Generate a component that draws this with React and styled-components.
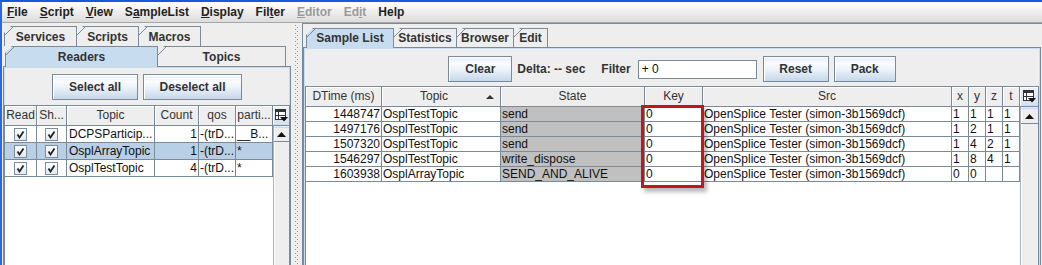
import React from 'react';
import styled, { createGlobalStyle } from 'styled-components';

const LINE = '#7a8a99';
const FONT = '"Liberation Sans", Arial, sans-serif';

const GlobalStyle = createGlobalStyle`
  html, body { margin: 0; padding: 0; background: #eeeeee; }
  body { font-family: ${FONT}; font-size: 12px; color: #333; }
`;

const Frame = styled.div`
  width: 1042px;
  height: 265px;
  box-sizing: border-box;
  border-top: 2px solid #1559dc;
  border-left: 2px solid #2a67e0;
  background: #eeeeee;
  display: flex;
  flex-direction: column;
  overflow: hidden;
`;

const MenuBar = styled.div`
  flex: none;
  height: 20px;
  border-bottom: 1px solid #a8a8a8;
  background: linear-gradient(#ffffff, #dcdcdc);
  display: flex;
  align-items: center;
  gap: 12px;
  padding-left: 5px;
`;

const MenuItem = styled.span`
  font-weight: bold;
  font-size: 12px;
  color: ${p => (p.$disabled ? '#9a9a9a' : '#222')};
  u { text-underline-offset: 1px; }
`;

const Body = styled.div`
  flex: none;
  height: 300px;
  display: flex;
`;

const LeftPane = styled.div`
  width: 289px;
  flex: none;
  display: flex;
  flex-direction: column;
  padding-top: 3px;
  box-sizing: border-box;
`;

const Splitter = styled.div`
  width: 11px;
  flex: none;
  display: flex;
  justify-content: center;
  padding-top: 2px;
`;

const Grip = styled.div`
  width: 3px;
  background-image:
    repeating-linear-gradient(to bottom, #8e9cab 0 1px, transparent 1px 4px),
    repeating-linear-gradient(to bottom, transparent 0 2px, #8e9cab 2px 3px, transparent 3px 4px);
  background-size: 1px 100%, 1px 100%;
  background-position: 0 0, 2px 0;
  background-repeat: no-repeat;
`;

const RightPane = styled.div`
  flex: 1;
  display: flex;
  flex-direction: column;
  border-top: 1px solid ${LINE};
  border-left: 1px solid ${LINE};
  padding-top: 4px;
  min-width: 0;
`;

const TabRow = styled.div`
  flex: none;
  height: ${p => p.$h}px;
  display: flex;
  align-items: flex-start;
  padding-left: ${p => p.$inset}px;
`;

const Tab = styled.div`
  position: relative;
  z-index: ${p => (p.$selected ? 1 : 0)};
  box-sizing: border-box;
  width: ${p => p.$w}px;
  height: ${p => p.$h + (p.$selected ? 1 : 0)}px;
  padding-bottom: ${p => (p.$selected ? 1 : 0)}px;
  border: 1px solid ${LINE};
  border-bottom: none;
  margin-right: -1px;
  background: ${p => (p.$selected ? '#c8dcf0' : '#eeeeee')};
  font-weight: bold;
  font-size: 12px;
  color: #333;
  display: flex;
  align-items: center;
  justify-content: center;
  clip-path: polygon(7px 0, 100% 0, 100% 100%, 0 100%, 0 7px);

  &::before {
    content: '';
    position: absolute;
    left: 0;
    top: 0;
    width: 8px;
    height: 8px;
    background: linear-gradient(to bottom right,
      transparent calc(50% - 0.7px), ${LINE} calc(50% - 0.7px),
      ${LINE} calc(50% + 0.7px), transparent calc(50% + 0.7px));
  }
`;

const TabContent = styled.div`
  flex: 1;
  display: flex;
  flex-direction: column;
  border: 1px solid ${LINE};
  margin: ${p => p.$margin};
  padding: ${p => p.$pad};
  box-shadow: inset 0 0 0 1px #c8dcf0;
  min-height: 0;
`;

const ButtonRow = styled.div`
  flex: none;
  display: flex;
  justify-content: center;
  align-items: center;
  gap: ${p => p.$gap ?? 5}px;
  padding: ${p => p.$pad};
`;

const Button = styled.button`
  box-sizing: border-box;
  width: ${p => p.$w}px;
  height: 26px;
  margin: 0 0 0 ${p => p.$ml || 0}px;
  padding: 0;
  border: 1px solid ${LINE};
  border-radius: 0;
  background: linear-gradient(to bottom, #e6eef6 0%, #fbfcfe 28%, #eaf1f8 55%, #c5d7ea 100%);
  box-shadow: inset 1px 1px 0 #ffffff;
  font-family: ${FONT};
  font-weight: bold;
  font-size: 12px;
  color: #333;
`;

const Label = styled.span`
  font-weight: bold;
  font-size: 12px;
  color: #333;
  margin: 0 ${p => p.$mr || 0}px 0 ${p => p.$ml || 0}px;
`;

const FilterInput = styled.input`
  box-sizing: border-box;
  width: 119px;
  height: 19px;
  margin: 0 0 0 7px;
  border: 1px solid ${LINE};
  padding: 0 3px;
  background: #fff;
  font-family: ${FONT};
  font-size: 12px;
  color: #111;
  outline: none;
`;

const ScrollPane = styled.div`
  position: relative;
  flex: 1;
  min-height: 0;
  display: grid;
  grid-template-columns: 1fr ${p => p.$bar}px;
  grid-template-rows: 20px 1fr;
  border: 1px solid ${LINE};
  background: #ffffff;
  margin-top: ${p => p.$mt || 0}px;
`;

const HeaderRow = styled.div`
  display: grid;
  grid-template-columns: ${p => p.$cols};
  background: #eeeeee;
`;

const HeadCell = styled.div`
  box-sizing: border-box;
  height: 20px;
  border-right: 1px solid ${LINE};
  border-bottom: 1px solid ${LINE};
  box-shadow: inset 1px 1px 0 #ffffff;
  line-height: 19px;
  font-size: 12px;
  color: #333;
  text-align: center;
  white-space: nowrap;
  overflow: hidden;
  display: ${p => (p.$sorted ? 'grid' : 'block')};
  grid-template-columns: 1fr auto;
  align-items: center;
`;

const SortIcon = styled.svg`
  margin-right: 6px;
`;

const Corner = styled.div`
  box-sizing: border-box;
  border-bottom: 1px solid ${LINE};
  background: linear-gradient(#eef3f9, #d3e0ee);
  box-shadow: inset 1px 1px 0 #ffffff;
  display: flex;
  align-items: center;
  justify-content: center;
`;

const Rows = styled.div`
  overflow: hidden;
`;

const Row = styled.div`
  display: grid;
  grid-template-columns: ${p => p.$cols};
  height: ${p => p.$h}px;
  box-sizing: border-box;
  border-bottom: 1px solid ${LINE};
  background: ${p => (p.$selected ? '#b8cfe5' : '#ffffff')};
`;

const Cell = styled.div`
  box-sizing: border-box;
  border-right: 1px solid ${LINE};
  padding: 0 1px 0 ${p => (p.$pl === undefined ? 1 : p.$pl)}px;
  text-align: ${p => p.$align || 'left'};
  background: ${p => p.$bg || 'transparent'};
  font-size: 12px;
  line-height: ${p => p.$lh}px;
  color: #111;
  white-space: nowrap;
  overflow: hidden;
  display: ${p => (p.$center ? 'flex' : 'block')};
  align-items: center;
  justify-content: center;
`;

const CheckBox = styled.span`
  box-sizing: border-box;
  width: 13px;
  height: 13px;
  border: 1px solid #7e8d9c;
  background: linear-gradient(#ffffff, #e1e9f2);
  display: flex;
  align-items: center;
  justify-content: center;
`;

const VBar = styled.div`
  background: #eeeeee;
  border-left: 1px solid #a9b5c2;
  box-shadow: inset 1px 0 0 #ffffff;
  display: flex;
  flex-direction: column;
`;

const ArrowButton = styled.div`
  flex: none;
  height: ${p => p.$h}px;
  margin-top: 1px;
  box-sizing: border-box;
  border-top: 1px solid #c8dcf0;
  border-bottom: 1px solid ${LINE};
  background: #eeeeee;
  box-shadow: inset 1px 0 0 #ffffff;
  display: flex;
  align-items: center;
  justify-content: center;
`;

const Highlight = styled.div`
  position: absolute;
  left: ${p => p.$x}px;
  top: ${p => p.$y}px;
  width: ${p => p.$w}px;
  height: ${p => p.$h}px;
  box-sizing: border-box;
  border: 3px solid #c4141c;
  box-shadow: 3px 4px 4px rgba(0, 0, 0, 0.28);
  pointer-events: none;
  z-index: 2;
`;

const UpArrow = () => (
  <svg width="9" height="5" viewBox="0 0 9 5">
    <path d="M0 5 L4.5 0 L9 5 Z" fill="#111" />
  </svg>
);

const ColumnControl = () => (
  <svg width="13" height="13" viewBox="0 0 13 13">
    <rect x="0.5" y="0.5" width="10" height="10" fill="#fff" stroke="#333" />
    <rect x="0.5" y="0.5" width="10" height="2.5" fill="#333" />
    <line x1="3.5" y1="3" x2="3.5" y2="10.5" stroke="#333" />
    <line x1="0.5" y1="6.5" x2="10.5" y2="6.5" stroke="#333" />
    <path d="M5 8 H13 L9 12.5 Z" fill="#111" />
  </svg>
);

const Check = () => (
  <CheckBox>
    <svg width="9" height="9" viewBox="0 0 9 9">
      <path d="M1.5 4.5 L3.5 7.5 L7.5 1.5" fill="none" stroke="#222" strokeWidth="1.8" />
    </svg>
  </CheckBox>
);

const LEFT_COLS = '32px 30px 88px 44px 37px 37px';
const RIGHT_COLS = '76px 119px 144px 58px 249px 17px 17px 17px 17px';

const menus = [
  { pre: '', u: 'F', post: 'ile' },
  { pre: '', u: 'S', post: 'cript' },
  { pre: '', u: 'V', post: 'iew' },
  { pre: 'S', u: 'a', post: 'mpleList' },
  { pre: '', u: 'D', post: 'isplay' },
  { pre: 'Fil', u: 't', post: 'er' },
  { pre: '', u: 'E', post: 'ditor', disabled: true },
  { pre: 'Ed', u: 'i', post: 't', disabled: true },
  { pre: 'Help', u: '', post: '' },
];

const readers = [
  { topic: 'DCPSParticip...', count: '1', qos: '-(trD...', part: '__B...' },
  { topic: 'OsplArrayTopic', count: '1', qos: '-(trD...', part: '*', selected: true },
  { topic: 'OsplTestTopic', count: '4', qos: '-(trD...', part: '*' },
];

const SRC = 'OpenSplice Tester (simon-3b1569dcf)';

const samples = [
  { time: '1448747', topic: 'OsplTestTopic', state: 'send', x: '1', y: '1', z: '1', t: '1' },
  { time: '1497176', topic: 'OsplTestTopic', state: 'send', x: '1', y: '2', z: '1', t: '1' },
  { time: '1507320', topic: 'OsplTestTopic', state: 'send', x: '1', y: '4', z: '2', t: '1' },
  { time: '1546297', topic: 'OsplTestTopic', state: 'write_dispose', x: '1', y: '8', z: '4', t: '1' },
  { time: '1603938', topic: 'OsplArrayTopic', state: 'SEND_AND_ALIVE', x: '0', y: '0', z: '', t: '' },
];

export default function App() {
  return (
    <>
      <GlobalStyle />
      <Frame>
        <MenuBar>
          {menus.map(m => (
            <MenuItem key={m.pre + m.u + m.post} $disabled={m.disabled}>
              {m.pre}{m.u && <u>{m.u}</u>}{m.post}
            </MenuItem>
          ))}
        </MenuBar>
        <Body>
          <LeftPane>
            <TabRow $h={20} $inset={2}>
              <Tab $w={73} $h={20}>Services</Tab>
              <Tab $w={63} $h={20}>Scripts</Tab>
              <Tab $w={63} $h={20}>Macros</Tab>
            </TabRow>
            <TabRow $h={20} $inset={3}>
              <Tab $w={153} $h={20} $selected>Readers</Tab>
              <Tab $w={129} $h={20}>Topics</Tab>
            </TabRow>
            <TabContent $margin="0 0 0 1px" $pad="0">
              <ButtonRow $pad="7px 0 5px">
                <Button $w={86}>Select all</Button>
                <Button $w={99}>Deselect all</Button>
              </ButtonRow>
              <ScrollPane $bar={16}>
                <HeaderRow $cols={LEFT_COLS}>
                  <HeadCell>Read</HeadCell>
                  <HeadCell>Sh...</HeadCell>
                  <HeadCell>Topic</HeadCell>
                  <HeadCell>Count</HeadCell>
                  <HeadCell>qos</HeadCell>
                  <HeadCell>parti...</HeadCell>
                </HeaderRow>
                <Corner><ColumnControl /></Corner>
                <Rows>
                  {readers.map(r => (
                    <Row key={r.topic} $cols={LEFT_COLS} $h={17} $selected={r.selected}>
                      <Cell $center><Check /></Cell>
                      <Cell $center><Check /></Cell>
                      <Cell $lh={16} $pl={2}>{r.topic}</Cell>
                      <Cell $lh={16} $align="right">{r.count}</Cell>
                      <Cell $lh={16}>{r.qos}</Cell>
                      <Cell $lh={16}>{r.part}</Cell>
                    </Row>
                  ))}
                </Rows>
                <VBar>
                  <ArrowButton $h={15}><UpArrow /></ArrowButton>
                </VBar>
              </ScrollPane>
            </TabContent>
          </LeftPane>
          <Splitter><Grip /></Splitter>
          <RightPane>
            <TabRow $h={19} $inset={3}>
              <Tab $w={88} $h={19} $selected>Sample List</Tab>
              <Tab $w={64} $h={19}>Statistics</Tab>
              <Tab $w={58} $h={19}>Browser</Tab>
              <Tab $w={35} $h={19}>Edit</Tab>
            </TabRow>
            <TabContent $margin="0 1px 0 0" $pad="0 1px">
              <ButtonRow $pad="8px 0 0" $gap={0}>
                <Button $w={64}>Clear</Button>
                <Label $ml={5} $mr={16}>Delta: -- sec</Label>
                <Label>Filter</Label>
                <FilterInput readOnly value="+ 0" />
                <Button $w={66} $ml={6}>Reset</Button>
                <Button $w={62} $ml={5}>Pack</Button>
              </ButtonRow>
              <ScrollPane $bar={18} $mt={4}>
                <HeaderRow $cols={RIGHT_COLS}>
                  <HeadCell>DTime (ms)</HeadCell>
                  <HeadCell $sorted>
                    <span>Topic</span>
                    <SortIcon width="8" height="4" viewBox="0 0 8 4">
                      <path d="M0 4 L4 0 L8 4 Z" fill="#333" />
                    </SortIcon>
                  </HeadCell>
                  <HeadCell>State</HeadCell>
                  <HeadCell>Key</HeadCell>
                  <HeadCell>Src</HeadCell>
                  <HeadCell>x</HeadCell>
                  <HeadCell>y</HeadCell>
                  <HeadCell>z</HeadCell>
                  <HeadCell>t</HeadCell>
                </HeaderRow>
                <Corner><ColumnControl /></Corner>
                <Rows>
                  {samples.map(s => (
                    <Row key={s.time} $cols={RIGHT_COLS} $h={15}>
                      <Cell $lh={14} $align="right">{s.time}</Cell>
                      <Cell $lh={14}>{s.topic}</Cell>
                      <Cell $lh={14} $bg="#c0c0c0">{s.state}</Cell>
                      <Cell $lh={14}>0</Cell>
                      <Cell $lh={14}>{SRC}</Cell>
                      <Cell $lh={14}>{s.x}</Cell>
                      <Cell $lh={14}>{s.y}</Cell>
                      <Cell $lh={14}>{s.z}</Cell>
                      <Cell $lh={14}>{s.t}</Cell>
                    </Row>
                  ))}
                </Rows>
                <VBar>
                  <ArrowButton $h={16}><UpArrow /></ArrowButton>
                </VBar>
                <Highlight $x={335} $y={18} $w={63} $h={83} />
              </ScrollPane>
            </TabContent>
          </RightPane>
        </Body>
      </Frame>
    </>
  );
}
